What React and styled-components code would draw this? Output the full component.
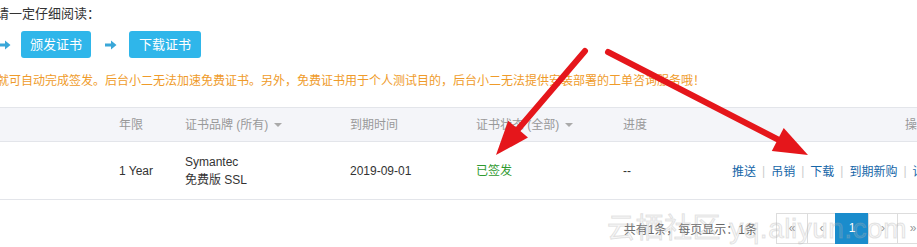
import React from "react";
import styled, { createGlobalStyle } from "styled-components";

const Global = createGlobalStyle`
  html, body { margin: 0; padding: 0; background: #fff; }
  body { font-family: "Liberation Sans", "Noto Sans CJK SC", sans-serif; }
`;

const Page = styled.div`
  position: relative;
  width: 917px;
  height: 247px;
  overflow: hidden;
  background: #fff;
  color: #333;
  font-size: 12px;
`;

const Title = styled.div`
  margin-left: -4px;
  padding-top: 5px;
  height: 17px;
  line-height: 17px;
  font-size: 13px;
  color: #333;
`;

const Steps = styled.div`
  display: flex;
  align-items: center;
  margin-top: 9px;
  height: 27px;
`;

const StepArrow = styled.svg`
  width: 12px;
  height: 10px;
  flex: none;
  margin: ${(p) => (p.$first ? "0 10px 0 -1px" : "0 12px 0 14px")};
`;

const StepButton = styled.div`
  width: ${(p) => p.$w}px;
  height: 27px;
  border-radius: 3px;
  background: #2fb6ea;
  color: #fff;
  font-size: 13px;
  line-height: 27px;
  text-align: center;
  white-space: nowrap;
`;

const Notice = styled.div`
  margin-top: 15px;
  margin-left: -3px;
  height: 16px;
  line-height: 16px;
  font-size: 12px;
  color: #ef9b2a;
  white-space: nowrap;
`;

const Table = styled.div`
  margin-top: 18px;
  width: 934px;
`;

const Row = styled.div`
  display: grid;
  grid-template-columns: 119px 66px 165px 126px 147px 100px 1fr;
  align-items: center;
  height: ${(p) => (p.$head ? "33px" : "57px")};
  background: ${(p) => (p.$head ? "#f4f5f9" : "#fff")};
  border-top: ${(p) => (p.$head ? "1px solid #e3e5ea" : "none")};
  border-bottom: 1px solid #e3e5ea;
  color: ${(p) => (p.$head ? "#999" : "#333")};
  font-size: 12px;
`;

const Cell = styled.div`
  white-space: nowrap;
  line-height: 18px;
  text-align: ${(p) => (p.$right ? "right" : "left")};
  padding-right: ${(p) => (p.$right ? "5px" : "0")};
`;

const Caret = styled.span`
  display: inline-block;
  margin-left: 6px;
  width: 0;
  height: 0;
  border-left: 4px solid transparent;
  border-right: 4px solid transparent;
  border-top: 4px solid #aaa;
  vertical-align: middle;
`;

const Status = styled.span`
  color: #2f9a2f;
`;

const Actions = styled.div`
  display: flex;
  justify-content: flex-start;
  align-items: center;
  padding-left: 9px;
  white-space: nowrap;
`;

const ActionLink = styled.span`
  color: #1566a8;
`;

const Sep = styled.span`
  color: #ccc;
  margin: 0 6px;
`;

const Pager = styled.div`
  display: flex;
  align-items: center;
  justify-content: flex-end;
  margin-top: 12px;
  margin-right: -12px;
  height: 32px;
`;

const PagerInfo = styled.div`
  color: #666;
  font-size: 12px;
  margin-right: 20px;
`;

const PageBox = styled.div`
  width: ${(p) => p.$w || 32}px;
  height: 31px;
  box-sizing: border-box;
  display: flex;
  align-items: center;
  justify-content: center;
  border: 1px solid ${(p) => (p.$active ? "#1a8ccc" : "#ddd")};
  margin-left: -1px;
  background: ${(p) => (p.$active ? "#1a8ccc" : "#fff")};
  color: ${(p) => (p.$active ? "#fff" : "#999")};
  font-size: 12px;
`;

const Watermark = styled.div`
  position: absolute;
  left: 607px;
  top: 206px;
  font-size: 28px;
  letter-spacing: 0.5px;
  color: rgba(200, 200, 200, 0.18);
  -webkit-text-stroke: 1px rgba(170, 170, 170, 0.3);
  white-space: nowrap;
  pointer-events: none;
`;

const Overlay = styled.svg`
  position: absolute;
  left: 0;
  top: 0;
  width: 917px;
  height: 247px;
  pointer-events: none;
`;

function SmallArrow({ first }) {
  return (
    <StepArrow $first={first} viewBox="0 0 12 10">
      <path d="M0 3.5h6V0.5l5.5 4.5-5.5 4.5V6.5H0z" fill="#3aa7d8" />
    </StepArrow>
  );
}

function RedArrow({ x1, y1, x2, y2 }) {
  const dx = x2 - x1;
  const dy = y2 - y1;
  const len = Math.hypot(dx, dy);
  const ux = dx / len;
  const uy = dy / len;
  const headLen = 34;
  const headW = 13;
  const bx = x2 - ux * headLen;
  const by = y2 - uy * headLen;
  const px = -uy;
  const py = ux;
  const pts = `${x2},${y2} ${bx + px * headW},${by + py * headW} ${bx - px * headW},${by - py * headW}`;
  return (
    <g>
      <line x1={x1} y1={y1} x2={bx + ux * 4} y2={by + uy * 4} stroke="#e5161b" strokeWidth="6" strokeLinecap="round" />
      <polygon points={pts} fill="#e5161b" />
    </g>
  );
}

const actions = ["推送", "吊销", "下载", "到期新购", "详情"];

export default function App() {
  return (
    <Page>
      <Global />
      <Title>请一定仔细阅读：</Title>
      <Steps>
        <SmallArrow first />
        <StepButton $w={70}>颁发证书</StepButton>
        <SmallArrow />
        <StepButton $w={72}>下载证书</StepButton>
      </Steps>
      <Notice>
        就可自动完成签发。后台小二无法加速免费证书。另外，免费证书用于个人测试目的，后台小二无法提供安装部署的工单咨询服务哦！
      </Notice>
      <Table>
        <Row $head>
          <Cell />
          <Cell>年限</Cell>
          <Cell>
            证书品牌 (所有)
            <Caret />
          </Cell>
          <Cell>到期时间</Cell>
          <Cell>
            证书状态 (全部)
            <Caret />
          </Cell>
          <Cell>进度</Cell>
          <Cell $right>操作</Cell>
        </Row>
        <Row>
          <Cell />
          <Cell>1 Year</Cell>
          <Cell>
            Symantec
            <br />
            免费版 SSL
          </Cell>
          <Cell>2019-09-01</Cell>
          <Cell>
            <Status>已签发</Status>
          </Cell>
          <Cell>--</Cell>
          <Actions>
            {actions.map((a, i) => (
              <React.Fragment key={a}>
                {i > 0 && <Sep>|</Sep>}
                <ActionLink>{a}</ActionLink>
              </React.Fragment>
            ))}
          </Actions>
        </Row>
      </Table>
      <Pager>
        <PagerInfo>共有1条，每页显示：1条</PagerInfo>
        <PageBox>«</PageBox>
        <PageBox $w={29}>‹</PageBox>
        <PageBox $active $w={34}>1</PageBox>
        <PageBox $w={30}>›</PageBox>
        <PageBox>»</PageBox>
      </Pager>
      <Watermark>云栖社区 yq.aliyun.com</Watermark>
      <Overlay viewBox="0 0 917 247">
        <RedArrow x1={585} y1={51} x2={496} y2={155} />
        <RedArrow x1={608} y1={52} x2={808} y2={155} />
      </Overlay>
    </Page>
  );
}
